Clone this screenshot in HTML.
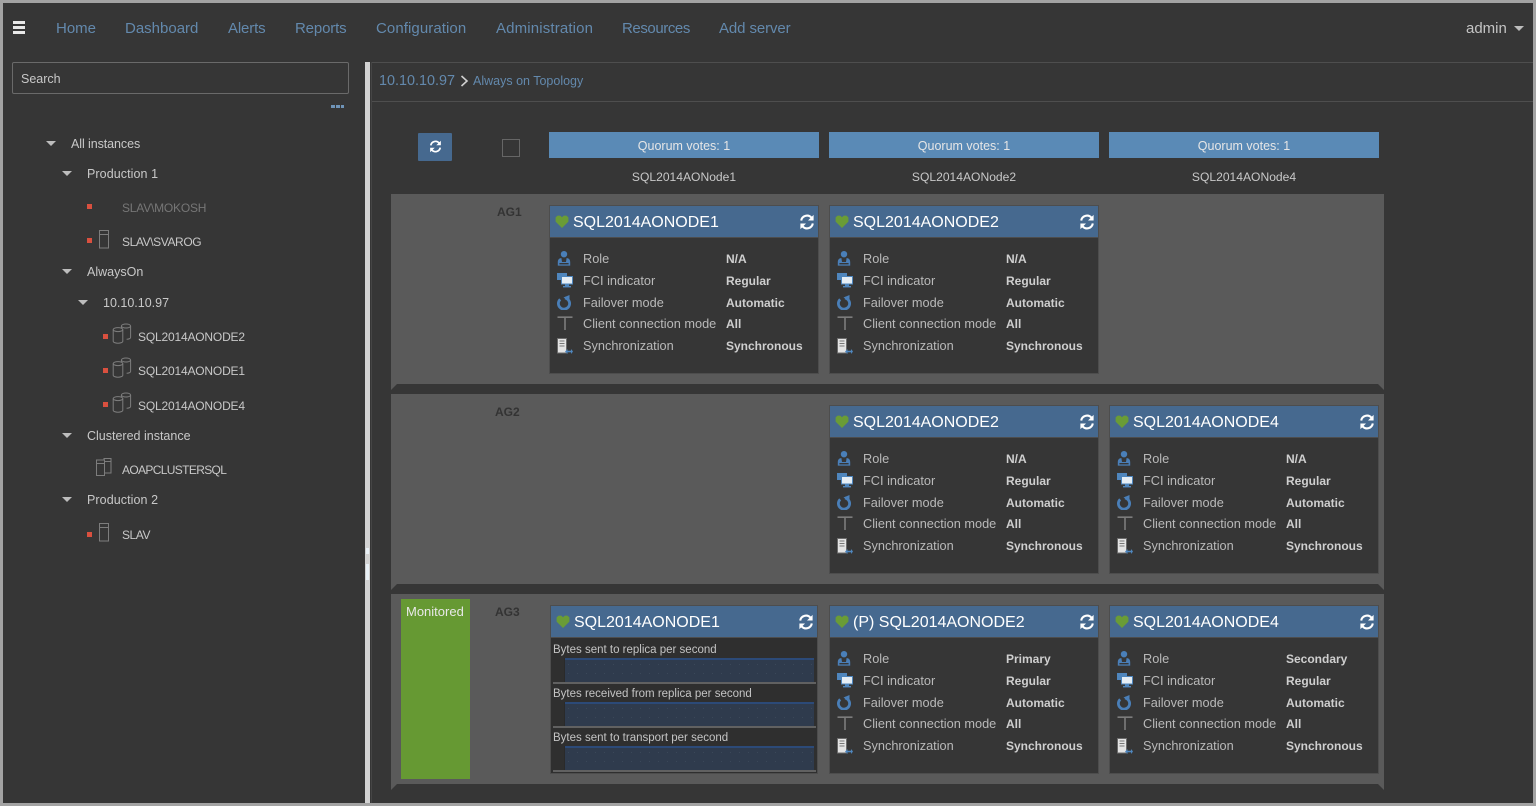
<!DOCTYPE html>
<html><head><meta charset="utf-8"><title>Always on Topology</title>
<style>
*{box-sizing:border-box}
html,body{margin:0;padding:0;width:1536px;height:806px;overflow:hidden;background:#363636;font-family:"Liberation Sans",sans-serif}
.a,.a *{position:absolute;white-space:nowrap}
#f{position:absolute;left:0;top:0;width:1536px;height:806px;border:3px solid #a3a3a3;z-index:9;pointer-events:none}
.n{top:20px;font-size:15px;line-height:18px;color:#6389ad}
.t{font-size:12.5px;line-height:16px;color:#c8c8c8}
.lf{margin-top:1px;font-size:12px}
.tri{width:0;height:0;border-left:5px solid transparent;border-right:5px solid transparent;border-top:5px solid #bdbdbd}
.sq{width:5px;height:5px;background:#d9503f}
.row{left:391px;width:993px;height:190px;background:#5a5a5a}
.row i{top:190px;width:0;height:0;border-top:6px solid #5a5a5a}
.row i.l{left:0;border-right:6px solid transparent}
.row i.r{right:0;border-left:6px solid transparent}
.ag{font-size:12px;font-weight:bold;color:#333;line-height:14px}
.q{top:132px;width:270px;height:26px;background:#5a8ab6;color:#e6e6e6;font-size:12.5px;line-height:28px;text-align:center}
.nm{top:169px;width:270px;text-align:center;font-size:12.1px;line-height:16px;color:#c8c8c8}
.c{width:270px;height:169px;background:#363636;border:1px solid #4d4d4d}
.h{left:0;top:0;width:268px;height:32px;background:#46698f;border-bottom:1px solid #4d4d4d}
.h b{left:23px;top:7px;font-weight:normal;font-size:16px;line-height:19px;color:#fff}
.hb{left:5px;top:9px}
.rf{right:3px;top:8px}
.ic{left:7px}
.k{left:33px;font-size:12.75px;line-height:16px;color:#b9b9b9;margin-top:1px}
.v{left:176px;font-size:12px;line-height:16px;font-weight:bold;color:#cfcfcf;margin-top:1px}
.lb{left:2px;font-size:11.5px;line-height:14px;color:#c4c4c4}
.ch{left:13px;width:250px;height:25px;background-color:#2f3b4d;background-image:radial-gradient(#3a4859 .6px,transparent .8px);background-size:9px 9px;border-top:2px solid #2c4a78}
.bl{left:2px;width:263px;height:2px;background:#616161}
.ax{left:13px;width:1px;height:24px;background:#2a2a2a}
</style></head><body>
<svg width="0" height="0" style="position:absolute"><defs>
<symbol id="heart" viewBox="0 0 14 13"><path d="M7 13L.6 6.6V2.4L2.6.6h2.6L7 2.2 8.8.6h2.6l2 1.8v4.2z" fill="#6a9c36"/></symbol>
<symbol id="ref" viewBox="0 0 16 16"><path d="M2.2 6.6A5.9 5.9 0 0 1 12.4 3.6M13.8 9.4A5.9 5.9 0 0 1 3.6 12.4" fill="none" stroke="#fff" stroke-width="2.1"/><path d="M14.6.9v5.6H9z M1.4 15.1V9.5H7z" fill="#fff"/></symbol>
<symbol id="role" viewBox="0 0 14 15"><circle cx="7" cy="3.2" r="3.2" fill="#4a7fb8"/><path d="M4.4 7C1.6 7.4.8 9 .8 11.4V14.6h12.4V11.4C13.2 9 12.4 7.4 9.6 7L9 11H5z" fill="#4a7fb8"/><rect x="2.4" y="12" width="9.2" height="1.4" fill="#363636"/></symbol>
<symbol id="fci" viewBox="0 0 16 15"><rect x="0" y="0" width="10" height="7" fill="#4f86bd"/><rect x="4.5" y="3.5" width="11" height="7.5" fill="#e6eef5" stroke="#4f86bd"/><rect x="8" y="11" width="4" height="2" fill="#4f86bd"/><rect x="6" y="13" width="8" height="1.4" fill="#4f86bd"/></symbol>
<symbol id="fail" viewBox="0 0 15 15"><path d="M3.2 4.4A5.6 5.6 0 1 0 8 3" fill="none" stroke="#4a7fb8" stroke-width="2.8"/><path d="M12.5 0v6.500L6.500 2.500z" fill="#4a7fb8"/></symbol>
<symbol id="cli" viewBox="0 0 16 15"><path d="M.5 1.2h15M8 1.2V14" fill="none" stroke="#7c7c7c" stroke-width="1.6"/></symbol>
<symbol id="syn" viewBox="0 0 16 16"><rect x=".5" y=".5" width="9" height="14.5" fill="#e4e4e4" stroke="#6c6c6c"/><path d="M2.5 3h5M2.5 5.5h5M2.5 8h5" stroke="#777"/><path d="M9 13.5h6.5" stroke="#4f86bd" stroke-width="1.6"/><path d="M10.5 11v5L8 13.5zM14 11v5l2-2.5z" fill="#4f86bd"/></symbol>
<symbol id="srv" viewBox="0 0 11 19"><rect x=".5" y=".5" width="9" height="17.5" fill="none" stroke="#7d7d7d"/><path d="M.5 4.5h9" stroke="#7d7d7d"/></symbol>
<symbol id="dbs" viewBox="0 0 20 21"><ellipse cx="14" cy="3" rx="4.6" ry="2" fill="none" stroke="#7d7d7d"/><path d="M9.4 3v2M18.6 3v11.5c0 1-2 1.7-4 1.7" fill="none" stroke="#7d7d7d"/><ellipse cx="6" cy="6.6" rx="4.8" ry="2" fill="#363636" stroke="#7d7d7d"/><path d="M1.2 6.6v11.6c0 1.1 2.2 2 4.8 2s4.8-.9 4.8-2V6.6" fill="none" stroke="#7d7d7d"/></symbol>
<symbol id="cls" viewBox="0 0 16 18"><rect x="8" y=".5" width="7" height="14.5" fill="none" stroke="#7d7d7d"/><path d="M8 3.5h7" stroke="#7d7d7d"/><rect x=".5" y="2" width="8" height="15.5" fill="#363636" stroke="#7d7d7d"/><path d="M.5 5.5h8" stroke="#7d7d7d"/></symbol>
</defs></svg>

<div class="a" style="left:0;top:0;width:1536px;height:806px">
<!-- nav -->
<div style="left:13px;top:21px;width:12px;height:3px;background:#e8e8e8"></div>
<div style="left:13px;top:26px;width:12px;height:3px;background:#e8e8e8"></div>
<div style="left:13px;top:31px;width:12px;height:3px;background:#e8e8e8"></div>
<span class="n" style="left:56px">Home</span>
<span class="n" style="left:125px">Dashboard</span>
<span class="n" style="left:228px;letter-spacing:-.15px">Alerts</span>
<span class="n" style="left:295px;letter-spacing:-.15px">Reports</span>
<span class="n" style="left:376px;letter-spacing:.08px">Configuration</span>
<span class="n" style="left:496px;letter-spacing:.15px">Administration</span>
<span class="n" style="left:622px;letter-spacing:-.42px">Resources</span>
<span class="n" style="left:719px;letter-spacing:-.1px">Add server</span>
<span class="n" style="left:1466px;color:#c4c4c4">admin</span>
<div class="tri" style="left:1514px;top:26px"></div>

<!-- sidebar -->
<div style="left:12px;top:62px;width:337px;height:32px;border:1px solid #6a6a6a;border-radius:2px"></div>
<span class="t" style="left:21px;top:71px">Search</span>
<div style="left:331px;top:105px;width:4px;height:3px;background:#6f94b8"></div>
<div style="left:336px;top:105px;width:4px;height:3px;background:#6f94b8"></div>
<div style="left:341px;top:105px;width:3px;height:3px;background:#6f94b8"></div>

<div class="tri" style="left:46px;top:141px"></div><span class="t" style="left:71px;top:136px;letter-spacing:-.08px">All instances</span>
<div class="tri" style="left:62px;top:171px"></div><span class="t" style="left:87px;top:166px;letter-spacing:.08px">Production 1</span>
<div class="sq" style="left:87px;top:204px"></div><span class="t lf" style="left:122px;top:199px;color:#767676;letter-spacing:-.2px">SLAV\MOKOSH</span>
<div class="sq" style="left:87px;top:238px"></div><svg style="left:99px;top:230px" width="11" height="19"><use href="#srv"/></svg><span class="t lf" style="left:122px;top:233px;letter-spacing:-.4px">SLAV\SVAROG</span>
<div class="tri" style="left:62px;top:269px"></div><span class="t" style="left:87px;top:264px">AlwaysOn</span>
<div class="tri" style="left:78px;top:300px"></div><span class="t" style="left:103px;top:295px">10.10.10.97</span>
<div class="sq" style="left:103px;top:334px"></div><svg style="left:112px;top:323px" width="20" height="21"><use href="#dbs"/></svg><span class="t lf" style="left:138px;top:328px;letter-spacing:-.18px">SQL2014AONODE2</span>
<div class="sq" style="left:103px;top:368px"></div><svg style="left:112px;top:357px" width="20" height="21"><use href="#dbs"/></svg><span class="t lf" style="left:138px;top:362px;letter-spacing:-.18px">SQL2014AONODE1</span>
<div class="sq" style="left:103px;top:402px"></div><svg style="left:112px;top:392px" width="20" height="21"><use href="#dbs"/></svg><span class="t lf" style="left:138px;top:397px;letter-spacing:-.18px">SQL2014AONODE4</span>
<div class="tri" style="left:62px;top:433px"></div><span class="t" style="left:87px;top:428px">Clustered instance</span>
<svg style="left:96px;top:458px" width="16" height="18"><use href="#cls"/></svg><span class="t lf" style="left:122px;top:461px;letter-spacing:-.65px">AOAPCLUSTERSQL</span>
<div class="tri" style="left:62px;top:497px"></div><span class="t" style="left:87px;top:492px;letter-spacing:.08px">Production 2</span>
<div class="sq" style="left:87px;top:532px"></div><svg style="left:99px;top:523px" width="11" height="19"><use href="#srv"/></svg><span class="t lf" style="left:122px;top:526px;letter-spacing:-.45px">SLAV</span>

<!-- splitter -->
<div style="left:365px;top:62px;width:5px;height:741px;background:#d2d2d2"></div>
<div style="left:366px;top:548px;width:3px;height:6px;background:#e8f0f6"></div>
<div style="left:366px;top:564px;width:3px;height:16px;background:#e8f0f6"></div>

<!-- breadcrumb -->
<div style="left:372px;top:62px;width:1161px;height:1px;background:#4e4e4e"></div>
<div style="left:372px;top:101px;width:1161px;height:1px;background:#4e4e4e"></div>
<div style="left:371px;top:62px;width:1px;height:741px;background:#454545"></div>
<span style="left:379px;top:73px;font-size:14.4px;line-height:17px;color:#6389ad">10.10.10.97</span>
<svg style="left:460px;top:75px" width="9" height="12"><path d="M1.5 1l5.5 5-5.5 5" fill="none" stroke="#d0d0d0" stroke-width="1.6"/></svg>
<span style="left:473px;top:73px;font-size:12.5px;line-height:16px;color:#6389ad">Always on Topology</span>

<!-- head -->
<div style="left:418px;top:133px;width:34px;height:28px;background:#46698f;border-radius:1px"></div>
<svg style="left:429px;top:140px" width="13" height="13"><use href="#ref"/></svg>
<div style="left:502px;top:139px;width:18px;height:18px;border:1px solid #666"></div>
<div class="q" style="left:549px">Quorum votes: 1</div>
<div class="q" style="left:829px">Quorum votes: 1</div>
<div class="q" style="left:1109px">Quorum votes: 1</div>
<div class="nm" style="left:549px">SQL2014AONode1</div>
<div class="nm" style="left:829px">SQL2014AONode2</div>
<div class="nm" style="left:1109px">SQL2014AONode4</div>

<!-- rows -->
<div class="row" style="top:194px"><i class="l"></i><i class="r"></i></div>
<div class="row" style="top:394px"><i class="l"></i><i class="r"></i></div>
<div class="row" style="top:594px"><i class="l"></i><i class="r"></i></div>
<span class="ag" style="left:497px;top:205px">AG1</span>
<span class="ag" style="left:495px;top:405px">AG2</span>
<span class="ag" style="left:495px;top:605px">AG3</span>
<div style="left:401px;top:599px;width:69px;height:180px;background:#669933"></div>
<span style="left:406px;top:604px;font-size:13px;line-height:15px;color:#e8e8e8">Monitored</span>

<!-- AG1 cards -->
<div class="c" style="left:549px;top:205px"><div class="h"><svg class="hb" width="14" height="13"><use href="#heart"/></svg><b>SQL2014AONODE1</b><svg class="rf" width="16" height="16"><use href="#ref"/></svg></div>
<svg class="ic" style="top:45px" width="14" height="15"><use href="#role"/></svg><span class="k" style="top:44px">Role</span><span class="v" style="top:44px">N/A</span>
<svg class="ic" style="top:67px" width="16" height="15"><use href="#fci"/></svg><span class="k" style="top:66px">FCI indicator</span><span class="v" style="top:66px">Regular</span>
<svg class="ic" style="top:89px" width="15" height="15"><use href="#fail"/></svg><span class="k" style="top:88px">Failover mode</span><span class="v" style="top:88px">Automatic</span>
<svg class="ic" style="top:110px" width="16" height="15"><use href="#cli"/></svg><span class="k" style="top:109px">Client connection mode</span><span class="v" style="top:109px">All</span>
<svg class="ic" style="top:132px" width="16" height="16"><use href="#syn"/></svg><span class="k" style="top:131px">Synchronization</span><span class="v" style="top:131px">Synchronous</span></div>

<div class="c" style="left:829px;top:205px"><div class="h"><svg class="hb" width="14" height="13"><use href="#heart"/></svg><b>SQL2014AONODE2</b><svg class="rf" width="16" height="16"><use href="#ref"/></svg></div>
<svg class="ic" style="top:45px" width="14" height="15"><use href="#role"/></svg><span class="k" style="top:44px">Role</span><span class="v" style="top:44px">N/A</span>
<svg class="ic" style="top:67px" width="16" height="15"><use href="#fci"/></svg><span class="k" style="top:66px">FCI indicator</span><span class="v" style="top:66px">Regular</span>
<svg class="ic" style="top:89px" width="15" height="15"><use href="#fail"/></svg><span class="k" style="top:88px">Failover mode</span><span class="v" style="top:88px">Automatic</span>
<svg class="ic" style="top:110px" width="16" height="15"><use href="#cli"/></svg><span class="k" style="top:109px">Client connection mode</span><span class="v" style="top:109px">All</span>
<svg class="ic" style="top:132px" width="16" height="16"><use href="#syn"/></svg><span class="k" style="top:131px">Synchronization</span><span class="v" style="top:131px">Synchronous</span></div>

<!-- AG2 cards -->
<div class="c" style="left:829px;top:405px"><div class="h"><svg class="hb" width="14" height="13"><use href="#heart"/></svg><b>SQL2014AONODE2</b><svg class="rf" width="16" height="16"><use href="#ref"/></svg></div>
<svg class="ic" style="top:45px" width="14" height="15"><use href="#role"/></svg><span class="k" style="top:44px">Role</span><span class="v" style="top:44px">N/A</span>
<svg class="ic" style="top:67px" width="16" height="15"><use href="#fci"/></svg><span class="k" style="top:66px">FCI indicator</span><span class="v" style="top:66px">Regular</span>
<svg class="ic" style="top:89px" width="15" height="15"><use href="#fail"/></svg><span class="k" style="top:88px">Failover mode</span><span class="v" style="top:88px">Automatic</span>
<svg class="ic" style="top:110px" width="16" height="15"><use href="#cli"/></svg><span class="k" style="top:109px">Client connection mode</span><span class="v" style="top:109px">All</span>
<svg class="ic" style="top:132px" width="16" height="16"><use href="#syn"/></svg><span class="k" style="top:131px">Synchronization</span><span class="v" style="top:131px">Synchronous</span></div>

<div class="c" style="left:1109px;top:405px"><div class="h"><svg class="hb" width="14" height="13"><use href="#heart"/></svg><b>SQL2014AONODE4</b><svg class="rf" width="16" height="16"><use href="#ref"/></svg></div>
<svg class="ic" style="top:45px" width="14" height="15"><use href="#role"/></svg><span class="k" style="top:44px">Role</span><span class="v" style="top:44px">N/A</span>
<svg class="ic" style="top:67px" width="16" height="15"><use href="#fci"/></svg><span class="k" style="top:66px">FCI indicator</span><span class="v" style="top:66px">Regular</span>
<svg class="ic" style="top:89px" width="15" height="15"><use href="#fail"/></svg><span class="k" style="top:88px">Failover mode</span><span class="v" style="top:88px">Automatic</span>
<svg class="ic" style="top:110px" width="16" height="15"><use href="#cli"/></svg><span class="k" style="top:109px">Client connection mode</span><span class="v" style="top:109px">All</span>
<svg class="ic" style="top:132px" width="16" height="16"><use href="#syn"/></svg><span class="k" style="top:131px">Synchronization</span><span class="v" style="top:131px">Synchronous</span></div>

<!-- AG3 cards -->
<div class="c" style="left:550px;top:605px;width:268px;background:#2f2f2f"><div class="h" style="width:266px"><svg class="hb" width="14" height="13"><use href="#heart"/></svg><b>SQL2014AONODE1</b><svg class="rf" width="16" height="16"><use href="#ref"/></svg></div>
<span class="lb" style="top:37px">Bytes sent to replica per second</span><div class="ch" style="top:52px"></div><div class="ax" style="top:52px"></div><div class="bl" style="top:76px"></div>
<span class="lb" style="top:81px">Bytes received from replica per second</span><div class="ch" style="top:96px"></div><div class="ax" style="top:96px"></div><div class="bl" style="top:120px"></div>
<span class="lb" style="top:125px">Bytes sent to transport per second</span><div class="ch" style="top:140px"></div><div class="ax" style="top:140px"></div><div class="bl" style="top:164px"></div></div>

<div class="c" style="left:829px;top:605px"><div class="h"><svg class="hb" width="14" height="13"><use href="#heart"/></svg><b>(P) SQL2014AONODE2</b><svg class="rf" width="16" height="16"><use href="#ref"/></svg></div>
<svg class="ic" style="top:45px" width="14" height="15"><use href="#role"/></svg><span class="k" style="top:44px">Role</span><span class="v" style="top:44px">Primary</span>
<svg class="ic" style="top:67px" width="16" height="15"><use href="#fci"/></svg><span class="k" style="top:66px">FCI indicator</span><span class="v" style="top:66px">Regular</span>
<svg class="ic" style="top:89px" width="15" height="15"><use href="#fail"/></svg><span class="k" style="top:88px">Failover mode</span><span class="v" style="top:88px">Automatic</span>
<svg class="ic" style="top:110px" width="16" height="15"><use href="#cli"/></svg><span class="k" style="top:109px">Client connection mode</span><span class="v" style="top:109px">All</span>
<svg class="ic" style="top:132px" width="16" height="16"><use href="#syn"/></svg><span class="k" style="top:131px">Synchronization</span><span class="v" style="top:131px">Synchronous</span></div>

<div class="c" style="left:1109px;top:605px"><div class="h"><svg class="hb" width="14" height="13"><use href="#heart"/></svg><b>SQL2014AONODE4</b><svg class="rf" width="16" height="16"><use href="#ref"/></svg></div>
<svg class="ic" style="top:45px" width="14" height="15"><use href="#role"/></svg><span class="k" style="top:44px">Role</span><span class="v" style="top:44px">Secondary</span>
<svg class="ic" style="top:67px" width="16" height="15"><use href="#fci"/></svg><span class="k" style="top:66px">FCI indicator</span><span class="v" style="top:66px">Regular</span>
<svg class="ic" style="top:89px" width="15" height="15"><use href="#fail"/></svg><span class="k" style="top:88px">Failover mode</span><span class="v" style="top:88px">Automatic</span>
<svg class="ic" style="top:110px" width="16" height="15"><use href="#cli"/></svg><span class="k" style="top:109px">Client connection mode</span><span class="v" style="top:109px">All</span>
<svg class="ic" style="top:132px" width="16" height="16"><use href="#syn"/></svg><span class="k" style="top:131px">Synchronization</span><span class="v" style="top:131px">Synchronous</span></div>
</div>
<div id="f"></div>
</body></html>
